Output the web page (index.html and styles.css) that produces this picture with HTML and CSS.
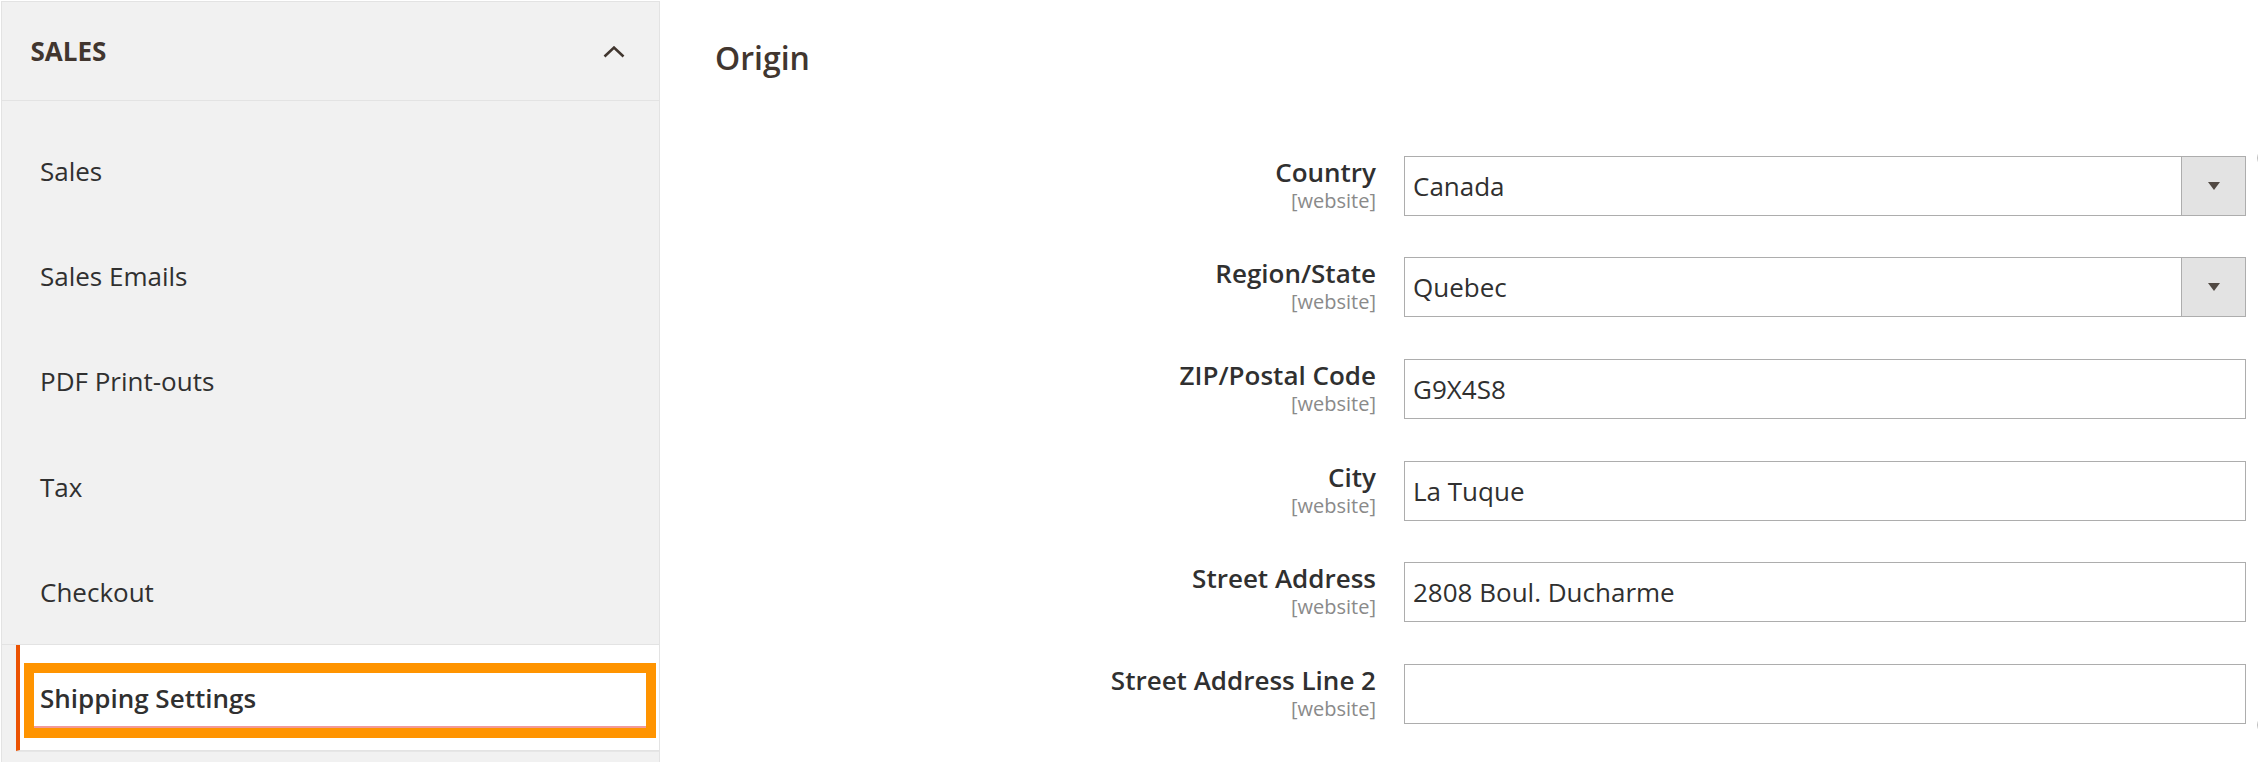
FILE: index.html
```html
<!DOCTYPE html>
<html lang="en">
<head>
<meta charset="utf-8">
<title>Shipping Settings</title>
<link rel="stylesheet" href="styles.css">
</head>
<body>
<div class="page">
  <aside class="nav">
    <div class="nav-title">
      <span>SALES</span>
      <svg class="chevron" width="22" height="12" viewBox="0 0 22 12"><polyline points="1.5,10.5 11,1.6 20.5,10.5" fill="none" stroke="#41362f" stroke-width="2.6"/></svg>
    </div>
    <ul class="nav-list">
      <li class="nav-item">Sales</li>
      <li class="nav-item">Sales Emails</li>
      <li class="nav-item">PDF Print-outs</li>
      <li class="nav-item">Tax</li>
      <li class="nav-item">Checkout</li>
    </ul>
    <div class="nav-active">
      <div class="highlight"><span class="highlight-text">Shipping Settings</span></div>
    </div>
    <div class="nav-next"></div>
  </aside>

  <main class="content">
    <h2 class="section-title">Origin</h2>
    <div class="form">
      <div class="row">
        <div class="label"><span class="label-text">Country</span><span class="scope">[website]</span></div>
        <div class="select"><span class="select-value">Canada</span><span class="select-btn"></span></div>
        <div class="side"><span class="edge edge-top"></span></div>
      </div>
      <div class="row">
        <div class="label"><span class="label-text">Region/State</span><span class="scope">[website]</span></div>
        <div class="select"><span class="select-value">Quebec</span><span class="select-btn"></span></div>
        <div class="side"></div>
      </div>
      <div class="row">
        <div class="label"><span class="label-text">ZIP/Postal Code</span><span class="scope">[website]</span></div>
        <input class="input" type="text" value="G9X4S8">
        <div class="side"></div>
      </div>
      <div class="row">
        <div class="label"><span class="label-text">City</span><span class="scope">[website]</span></div>
        <input class="input" type="text" value="La Tuque">
        <div class="side"></div>
      </div>
      <div class="row">
        <div class="label"><span class="label-text">Street Address</span><span class="scope">[website]</span></div>
        <input class="input" type="text" value="2808 Boul. Ducharme">
        <div class="side"></div>
      </div>
      <div class="row">
        <div class="label"><span class="label-text">Street Address Line 2</span><span class="scope">[website]</span></div>
        <input class="input" type="text" value="">
        <div class="side"><span class="edge edge-low"></span></div>
      </div>
    </div>
  </main>
</div>
</body>
</html>
```

FILE: styles.css
```css
html, body {
  margin: 0;
  padding: 0;
  background: #ffffff;
  overflow: hidden;
}

body {
  font-family: "Open Sans", "Noto Sans", sans-serif;
  color: #303030;
}

.page {
  display: flex;
  height: 762px;
}

/* ---------- left navigation ---------- */
.nav {
  flex: none;
  width: 659px;
  box-sizing: border-box;
  margin: 1px 0 0 1px;
  border: 1px solid #e3e3e3;
  border-bottom: none;
  background: #f1f1f1;
}

.nav-title {
  height: 98px;
  border-bottom: 1px solid #e3e3e3;
  display: flex;
  align-items: center;
  justify-content: space-between;
  padding: 0 34px 0 28.5px;
  font-size: 26px;
  font-weight: 700;
  color: #41362f;
}

.chevron {
  display: block;
  margin-top: 2px;
}

.nav-list {
  list-style: none;
  margin: 0;
  padding: 17px 0 0;
  border-bottom: 1px solid #e3e3e3;
}

.nav-item {
  height: 105.3px;
  display: flex;
  align-items: center;
  padding-left: 38px;
  font-size: 26px;
  color: #303030;
}

.nav-active {
  margin-left: 14px;
  border-left: 4px solid #eb5202;
  border-bottom: 1px solid #e3e3e3;
  background: #ffffff;
  padding: 17.5px 3px 12.5px 4px;
}

.highlight {
  height: 75px;
  box-sizing: border-box;
  border: 10px solid #ff9400;
  display: flex;
}

.highlight-text {
  flex: 1;
  display: flex;
  align-items: center;
  padding: 0 0 3px 6px;
  border-bottom: 2px solid #f19a9a;
  font-size: 26px;
  font-weight: 600;
  color: #303030;
}

.nav-next {
  margin-left: 14px;
  border-top: 1px solid #e6e6e6;
  height: 20px;
}

/* ---------- main content ---------- */
.content {
  flex: 1;
  min-width: 0;
  padding: 38px 0 0 55px;
}

.section-title {
  margin: 0;
  font-size: 32px;
  line-height: 40px;
  font-weight: 600;
  color: #41362f;
}

.form {
  margin-top: 77.5px;
  display: flex;
  flex-direction: column;
  gap: 41.7px;
}

.row {
  display: grid;
  grid-template-columns: 1fr 842px 12px;
  height: 60px;
}

.label {
  display: flex;
  flex-direction: column;
  align-items: flex-end;
  padding: 2px 28px 0 0;
  text-align: right;
}

.label-text {
  font-size: 26px;
  line-height: 28px;
  font-weight: 600;
  color: #303030;
  white-space: nowrap;
}

.scope {
  margin-top: 4px;
  font-size: 20px;
  line-height: 22px;
  color: #8a8a8a;
}

.select {
  display: flex;
  height: 60px;
  box-sizing: border-box;
  border: 1px solid #adadad;
  background: #ffffff;
}

.select-value {
  flex: 1;
  display: flex;
  align-items: center;
  padding-left: 8px;
  font-size: 26px;
  color: #303030;
}

.select-btn {
  width: 64px;
  box-sizing: border-box;
  border-left: 1px solid #adadad;
  background: #e3e3e3;
  display: flex;
  align-items: center;
  justify-content: center;
}

.select-btn::after {
  content: "";
  border-left: 6.5px solid transparent;
  border-right: 6.5px solid transparent;
  border-top: 8px solid #514943;
}

.input {
  display: block;
  width: 100%;
  height: 60px;
  box-sizing: border-box;
  margin: 0;
  padding: 0 8px;
  border: 1px solid #adadad;
  border-radius: 0;
  background: #ffffff;
  font: 400 26px "Open Sans", "Noto Sans", sans-serif;
  color: #303030;
  outline: none;
}

.side {
  position: relative;
}

.edge {
  display: block;
  width: 30px;
  height: 18px;
  box-sizing: border-box;
  margin-left: 10.5px;
  border: 1.5px solid #bdbdbd;
  border-radius: 9px;
}

.edge-top {
  margin-top: -6.5px;
}

.edge-low {
  margin-top: 52px;
}
```
